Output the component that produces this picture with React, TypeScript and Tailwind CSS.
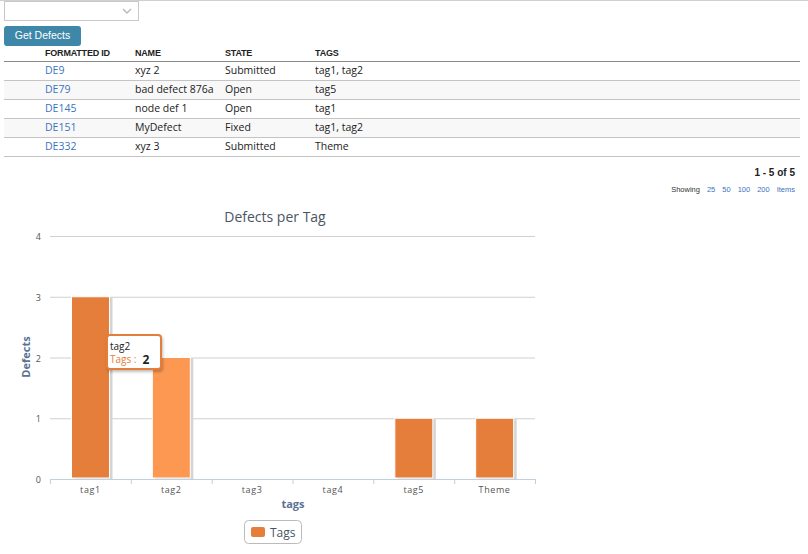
import React from "react";

const rows = [
  { id: "DE9", name: "xyz 2", state: "Submitted", tags: "tag1, tag2" },
  { id: "DE79", name: "bad defect 876a", state: "Open", tags: "tag5" },
  { id: "DE145", name: "node def 1", state: "Open", tags: "tag1" },
  { id: "DE151", name: "MyDefect", state: "Fixed", tags: "tag1, tag2" },
  { id: "DE332", name: "xyz 3", state: "Submitted", tags: "Theme" },
];

const cats = ["tag1", "tag2", "tag3", "tag4", "tag5", "Theme"];
const vals = [3, 2, 0, 0, 1, 1];

function Chart() {
  const x0 = 50;
  const x1 = 535;
  const cw = (x1 - x0) / 6;
  const yBase = 279;
  const step = 60.75;
  return (
    <div className="relative h-[354px] w-[560px]">
      <svg width="560" height="354" className="block" style={{ fontFamily: "'Open Sans', sans-serif" }}>
        <text x="275" y="22" textAnchor="middle" fontSize="14" fill="#4a5563">
          Defects per Tag
        </text>
        {[0, 1, 2, 3, 4].map((v) => (
          <g key={v}>
            <line x1={x0} x2={x1} y1={yBase - v * step + 0.5} y2={yBase - v * step + 0.5} stroke={v === 0 ? "#c0d0e0" : "#d0d0d0"} strokeWidth="1" />
            <text x="41" y={yBase - v * step + 4} textAnchor="end" fontSize="9" fill="#555">
              {v}
            </text>
          </g>
        ))}
        {[0, 1, 2, 3, 4, 5, 6].map((i) => (
          <line key={i} x1={x0 + i * cw + 0.5} x2={x0 + i * cw + 0.5} y1={yBase} y2={yBase + 5} stroke="#c0d0e0" />
        ))}
        {vals.map((v, i) => {
          if (!v) return null;
          const bx = x0 + i * cw + 21.5;
          const top = yBase - v * step;
          return (
            <g key={i}>
              <rect x={bx + 3} y={top + 1} width={38} height={yBase - top - 1} fill="#d4d4d4" />
              <rect x={bx} y={top} width={38} height={yBase - top - 1} fill={i === 1 ? "#fd9852" : "#e57e3a"} stroke="#fff" strokeWidth="1" />
            </g>
          );
        })}
        {cats.map((c, i) => (
          <text key={c} x={x0 + i * cw + cw / 2} y="293" textAnchor="middle" fontSize="9" fill="#555" letterSpacing="0.6">
            {c}
          </text>
        ))}
        <text x="293" y="308" textAnchor="middle" fontSize="11" fontWeight="bold" fill="#5b7294">
          tags
        </text>
        <text transform="translate(30 157) rotate(-90)" textAnchor="middle" fontSize="11" fontWeight="bold" fill="#5b7294">
          Defects
        </text>
        <rect x="244.5" y="320.5" width="57" height="23" rx="4" fill="#fff" stroke="#bbb" />
        <rect x="251" y="327" width="14" height="10" rx="2" fill="#e57e3a" />
        <text x="270" y="337" fontSize="12" fill="#4a5563">
          Tags
        </text>
      </svg>
      <div className="absolute left-[106px] top-[134px] h-[36px] w-[56px] rounded-[4px] border-2 border-[#e57e3a] bg-white px-[2px] pt-[4px] text-[10px] leading-[13px] shadow-[1px_2px_3px_rgba(0,0,0,0.25)] [font-family:'Open_Sans',sans-serif]">
        <div className="text-[#222]">tag2</div>
        <div className="flex items-center">
          <span className="text-[#e57e3a]">Tags :</span>
          <span className="ml-[6px] text-[12px] font-bold text-[#222]">2</span>
        </div>
      </div>
    </div>
  );
}

export default function App() {
  return (
    <div className="h-[554px] w-[808px] overflow-hidden border-t border-[#d0d0d0] bg-white [font-family:'Liberation_Sans',Arial,sans-serif]">
      <div className="ml-[4px] flex h-[20px] w-[135px] items-center justify-end border border-[#c8c8c8] bg-white pr-[6px]">
        <svg width="10" height="6" viewBox="0 0 10 6">
          <path d="M1 1 L5 5 L9 1" fill="none" stroke="#b8b8b8" strokeWidth="1.4" />
        </svg>
      </div>
      <button className="ml-[4px] mt-[5px] flex h-[20px] w-[77px] items-center justify-center rounded-[3px] bg-[#3e87a8] text-[10.5px] text-white">
        Get Defects
      </button>
      <div className="ml-[4px] mr-[8px] text-[10.5px] [font-family:'Open_Sans',sans-serif]">
        <div className="grid h-[16px] grid-cols-[41px_90px_90px_90px_1fr] items-center border-b border-[#8a8a8a] text-[9px] font-bold text-[#222] [font-family:'Liberation_Sans',Arial,sans-serif] tracking-[-0.2px]">
          <div />
          <div>FORMATTED ID</div>
          <div>NAME</div>
          <div>STATE</div>
          <div>TAGS</div>
        </div>
        {rows.map((r, i) => (
          <div
            key={r.id}
            className={`grid h-[19px] grid-cols-[41px_90px_90px_90px_1fr] items-center border-b border-[#c4c4c4] text-[#222] ${i % 2 === 1 ? "bg-[#f8f8f8]" : "bg-white"}`}
          >
            <div />
            <div className="text-[#3a73c0]">{r.id}</div>
            <div>{r.name}</div>
            <div>{r.state}</div>
            <div>{r.tags}</div>
          </div>
        ))}
      </div>
      <div className="mr-[13px] mt-[10px] flex flex-col items-end">
        <div className="text-[10px] font-bold leading-[12px] text-[#222]">1 - 5 of 5</div>
        <div className="mt-[6px] flex gap-[7px] text-[7.5px] leading-[9px] text-[#333]">
          <span>Showing</span>
          <span className="text-[#3a73c0]">25</span>
          <span className="text-[#3a73c0]">50</span>
          <span className="text-[#3a73c0]">100</span>
          <span className="text-[#3a73c0]">200</span>
          <span className="text-[#3a73c0]">Items</span>
        </div>
      </div>
      <div className="mt-[6px]">
        <Chart />
      </div>
    </div>
  );
}
